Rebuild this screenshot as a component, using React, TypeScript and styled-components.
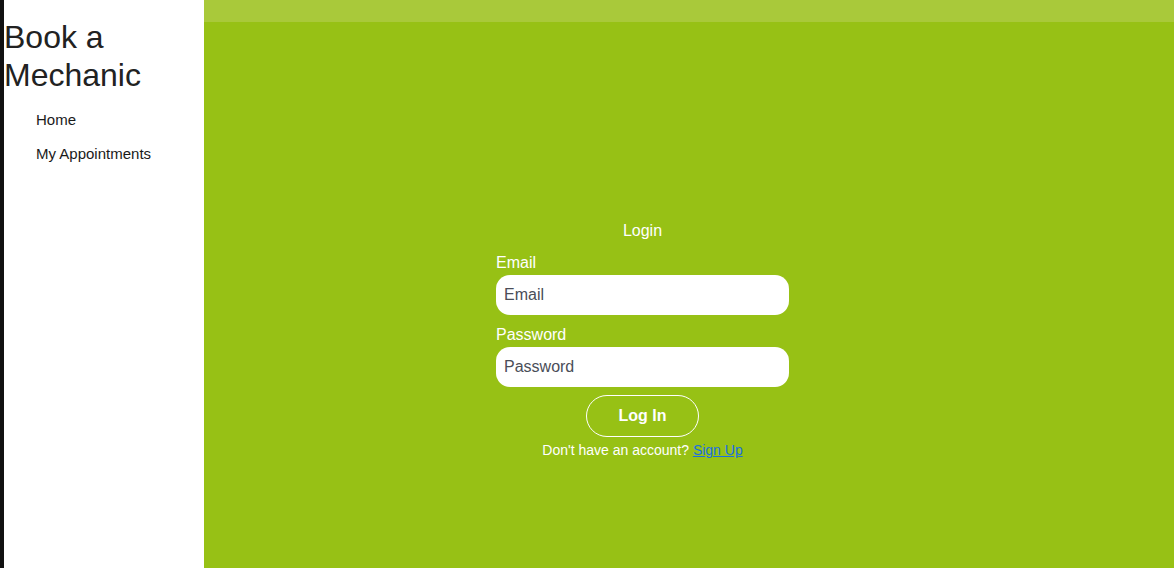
import styled, { createGlobalStyle } from 'styled-components';

const GlobalStyle = createGlobalStyle`
  html, body, #root {
    height: 100%;
    margin: 0;
  }

  body {
    font-family: 'Liberation Sans', Arial, sans-serif;
    background: #111111;
  }

  * {
    box-sizing: border-box;
  }
`;

const App = () => {
  return (
    <>
      <GlobalStyle />
      <Layout>
        <Sidebar>
          <Brand>Book a Mechanic</Brand>
          <Nav>
            <NavLink href="#">Home</NavLink>
            <NavLink href="#">My Appointments</NavLink>
          </Nav>
        </Sidebar>
        <Main>
          <TopBar />
          <Content>
            <LoginForm onSubmit={(e) => e.preventDefault()}>
              <FormTitle>Login</FormTitle>
              <Field $spaceAfter={11}>
                <Label htmlFor="email">Email</Label>
                <Input id="email" type="email" placeholder="Email" />
              </Field>
              <Field $spaceAfter={8}>
                <Label htmlFor="password">Password</Label>
                <Input id="password" type="password" placeholder="Password" />
              </Field>
              <SubmitButton type="submit">Log In</SubmitButton>
              <SignupText>
                Don't have an account? <SignupLink href="#">Sign Up</SignupLink>
              </SignupText>
            </LoginForm>
          </Content>
        </Main>
      </Layout>
    </>
  );
};

const Layout = styled.div`
  display: flex;
  height: 100%;
  padding-left: 4px;
`;

const Sidebar = styled.aside`
  width: 200px;
  flex-shrink: 0;
  background: #ffffff;
  padding-top: 18px;
`;

const Brand = styled.h1`
  margin: 0;
  font-size: 32px;
  font-weight: 400;
  line-height: 38px;
  color: #222222;
`;

const Nav = styled.nav`
  display: flex;
  flex-direction: column;
  gap: 17px;
  padding: 17px 0 0 32px;
`;

const NavLink = styled.a`
  font-size: 15px;
  line-height: 17px;
  color: #1a1a1a;
  text-decoration: none;
`;

const Main = styled.main`
  flex: 1;
  display: flex;
  flex-direction: column;
  background: #97c115;
`;

const TopBar = styled.div`
  height: 22px;
  background: #a9c93a;
`;

const Content = styled.div`
  flex: 1;
  display: flex;
  justify-content: center;
  padding: 200px 93px 0 0;
`;

const LoginForm = styled.form`
  width: 293px;
  display: flex;
  flex-direction: column;
  align-items: center;
  color: #ffffff;
`;

const FormTitle = styled.div`
  font-size: 16px;
  line-height: 18px;
  margin-bottom: 14px;
`;

const Field = styled.div<{ $spaceAfter: number }>`
  width: 100%;
  display: flex;
  flex-direction: column;
  gap: 3px;
  margin-bottom: ${({ $spaceAfter }) => $spaceAfter}px;
`;

const Label = styled.label`
  font-size: 16px;
  line-height: 18px;
  color: #ffffff;
`;

const Input = styled.input`
  width: 100%;
  height: 40px;
  border: none;
  border-radius: 14px;
  padding: 0 8px;
  background: #ffffff;
  font-family: 'Liberation Sans', Arial, sans-serif;
  font-size: 16px;
  color: #333333;
  outline: none;

  &::placeholder {
    color: #4a4d58;
  }
`;

const SubmitButton = styled.button`
  width: 113px;
  height: 42px;
  border: 1px solid #ffffff;
  border-radius: 21px;
  background: transparent;
  color: #ffffff;
  font-family: 'Liberation Sans', Arial, sans-serif;
  font-size: 16px;
  font-weight: 700;
  cursor: pointer;
  margin-bottom: 5px;
`;

const SignupText = styled.p`
  margin: 0;
  font-size: 14px;
  line-height: 16px;
  color: #ffffff;
`;

const SignupLink = styled.a`
  color: #1a6fe0;
  text-decoration: underline;
`;

export default App;
